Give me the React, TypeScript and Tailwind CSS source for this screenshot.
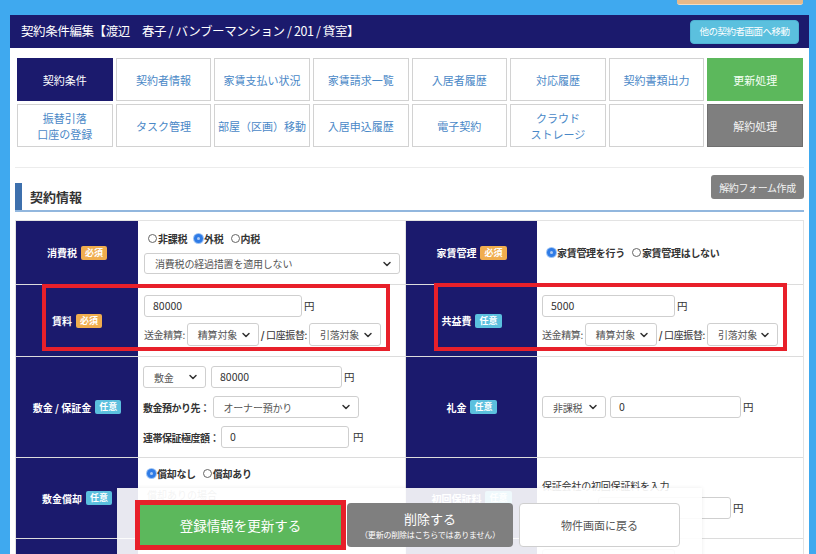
import React from "react";
import { ChevronDown } from "lucide-react";

type Tab = { label: string; kind?: "active" | "green" | "gray" };

const tabs: Tab[] = [
  { label: "契約条件", kind: "active" },
  { label: "契約者情報" },
  { label: "家賃支払い状況" },
  { label: "家賃請求一覧" },
  { label: "入居者履歴" },
  { label: "対応履歴" },
  { label: "契約書類出力" },
  { label: "更新処理", kind: "green" },
  { label: "振替引落\n口座の登録" },
  { label: "タスク管理" },
  { label: "部屋（区画）移動" },
  { label: "入居申込履歴" },
  { label: "電子契約" },
  { label: "クラウド\nストレージ" },
  { label: "" },
  { label: "解約処理", kind: "gray" },
];

function tabClass(kind?: Tab["kind"]) {
  if (kind === "active") return "bg-[#1b1a6d] border-[#1b1a6d] text-white";
  if (kind === "green") return "bg-[#5cb85c] border-[#5cb85c] text-[#f4fff4]";
  if (kind === "gray") return "bg-[#7f7f7f] border-[#6f6f6f] text-[#f2f2f2]";
  return "bg-white border-[#d2d2d2] text-[#4a88c7]";
}

function Badge({ req }: { req?: boolean }) {
  return (
    <span
      className={
        "rounded-[2px] px-[4px] py-[1px] text-[9px] font-bold leading-[12px] text-white " +
        (req ? "bg-[#f0ad4e]" : "bg-[#5bc0de]")
      }
    >
      {req ? "必須" : "任意"}
    </span>
  );
}

function Label({ text, req }: { text: string; req?: boolean }) {
  return (
    <div className="flex items-center justify-center gap-[4px] bg-[#1b1a6d] text-[10px] font-bold text-white">
      <span className="whitespace-nowrap">{text}</span>
      <Badge req={req} />
    </div>
  );
}

function Sel({ w, text, h = 22 }: { w: number; text: string; h?: number }) {
  return (
    <div
      className="flex shrink-0 items-center justify-between whitespace-nowrap rounded-[3px] border border-[#cfcfcf] bg-white pl-[10px] pr-[6px] text-[10px] font-normal tracking-[-0.2px] text-[#555]"
      style={{ width: w, height: h }}
    >
      <span>{text}</span>
      <ChevronDown size={12} strokeWidth={3} color="#333" />
    </div>
  );
}

function Input({ w, value }: { w: number; value: string }) {
  return (
    <div
      className="flex h-[22px] shrink-0 items-center rounded-[3px] border border-[#cfcfcf] bg-white px-[8px] text-[10.5px] font-normal tracking-normal text-[#333]"
      style={{ width: w }}
    >
      {value}
    </div>
  );
}

function Radio({ checked, label }: { checked?: boolean; label: string }) {
  return (
    <span className="flex items-center gap-[1px] whitespace-nowrap text-[10px] font-bold tracking-[-0.3px] text-[#333]">
      {checked ? (
        <span className="flex h-[9px] w-[9px] items-center justify-center rounded-full bg-[#2f7be6] ring-1 ring-[#9cc3f5]">
          <span className="h-[3px] w-[3px] rounded-full bg-white/60" />
        </span>
      ) : (
        <span className="h-[9px] w-[9px] rounded-full border border-[#666] bg-white" />
      )}
      {label}
    </span>
  );
}

function Yen() {
  return <span className="text-[10.5px] font-normal text-[#333]">円</span>;
}

function TransferLine({ b }: { b: number }) {
  return (
    <div className="flex items-center whitespace-nowrap text-[10px] tracking-[-0.4px] text-[#555]">
      <span>送金精算:</span>
      <span className="ml-[2px]">
        <Sel w={72} text="精算対象" h={23} />
      </span>
      <span className="mx-[2px] text-[#333]">
        <b>/</b> 口座振替:
      </span>
      <Sel w={b} text="引落対象" h={23} />
    </div>
  );
}

export default function App() {
  return (
    <div
      className="relative h-[554px] overflow-hidden bg-[#3fa9ef] pl-[10px] pr-[7px]"
      style={{ fontFamily: '"Noto Sans CJK JP", "Noto Sans", sans-serif' }}
    >
      {/* cut-off element above */}
      <div className="flex justify-end pr-[6px]">
        <div className="h-[5px] w-[126px] rounded-b-[3px] border-b border-[#f3dcc0] bg-[#e6b989]" />
      </div>

      <div className="mt-[10px] bg-white">
        {/* header */}
        <div className="flex h-[33px] items-center justify-between bg-[#1b1a6d] pl-[11px] pr-[10px]">
          <span className="whitespace-nowrap text-[12.5px] tracking-[-0.4px] text-white">
            契約条件編集【渡辺　春子 / バンブーマンション / 201 / 貸室】
          </span>
          <button className="h-[24px] w-[109px] whitespace-nowrap rounded-[4px] border border-[#4fb3d3] bg-[#5bc0de] text-[9.5px] tracking-[-0.5px] text-white">
            他の契約者画面へ移動
          </button>
        </div>

        {/* tabs */}
        <div className="grid grid-cols-8 gap-[3px] pl-[7px] pr-[6px] pt-[10px]">
          {tabs.map((t, i) => (
            <div
              key={i}
              className={
                "flex h-[43px] items-center justify-center whitespace-pre-line border text-center text-[11px] leading-[16px] " +
                tabClass(t.kind)
              }
            >
              {t.label}
            </div>
          ))}
        </div>

        <div className="mx-[5px] mt-[20px] h-px bg-[#ececec]" />

        {/* heading */}
        <div className="mx-[5px] mt-[7px] flex items-end justify-between border-b-2 border-[#92b7de]">
          <div className="mt-[8px] flex h-[27px] items-center border-l-[7px] border-[#3d70ad] pl-[8px] text-[13px] font-bold text-[#333]">
            契約情報
          </div>
          <button className="mb-[11px] h-[24px] w-[93px] self-start whitespace-nowrap rounded-[3px] bg-[#808080] text-[10px] tracking-[-0.4px] text-[#f2f2f2]">
            解約フォーム作成
          </button>
        </div>

        {/* table */}
        <div className="mx-[5px] mt-[8px] border border-[#e3e3e3]">
          {/* row 1 */}
          <div className="grid h-[63px] grid-cols-[122px_268px_131px_1fr]">
            <Label text="消費税" req />
            <div className="flex flex-col justify-center gap-[7px] border-r border-[#e3e3e3] pl-[6px] pr-[5px]">
              <div className="flex items-center gap-[7px] pl-[4px]">
                <Radio label="非課税" />
                <Radio checked label="外税" />
                <Radio label="内税" />
              </div>
              <Sel w={256} text="消費税の経過措置を適用しない" h={21} />
            </div>
            <Label text="家賃管理" req />
            <div className="flex items-center gap-[7px] pl-[10px]">
              <Radio checked label="家賃管理を行う" />
              <Radio label="家賃管理はしない" />
            </div>
          </div>

          {/* row 2 */}
          <div className="grid h-[72px] grid-cols-[122px_268px_131px_1fr] border-t border-[#dcdcdc]">
            <Label text="賃料" req />
            <div className="flex flex-col justify-center gap-[6px] border-r border-[#e3e3e3] pl-[6px]">
              <div className="flex items-center gap-[2px]">
                <Input w={158} value="80000" />
                <Yen />
              </div>
              <TransferLine b={72} />
            </div>
            <Label text="共益費" />
            <div className="flex flex-col justify-center gap-[6px] pl-[5px]">
              <div className="flex items-center gap-[2px]">
                <Input w={133} value="5000" />
                <Yen />
              </div>
              <TransferLine b={71} />
            </div>
          </div>

          {/* row 3 */}
          <div className="grid h-[101px] grid-cols-[122px_268px_131px_1fr] border-t border-[#dcdcdc]">
            <Label text="敷金 / 保証金" />
            <div className="flex flex-col justify-center gap-[8px] border-r border-[#e3e3e3] pl-[5px]">
              <div className="flex items-center gap-[5px]">
                <Sel w={63} text="敷金" />
                <div className="flex items-center gap-[2px]">
                  <Input w={131} value="80000" />
                  <Yen />
                </div>
              </div>
              <div className="flex items-center gap-[3px] whitespace-nowrap text-[10px] font-bold tracking-[-0.5px] text-[#333]">
                <span>敷金預かり先：</span>
                <Sel w={146} text="オーナー預かり" />
              </div>
              <div className="flex items-center gap-[2px] whitespace-nowrap text-[10px] font-bold tracking-[-0.5px] text-[#333]">
                <span>連帯保証極度額：</span>
                <Input w={128} value="0" />
                <span className="ml-[2px]">
                  <Yen />
                </span>
              </div>
            </div>
            <Label text="礼金" />
            <div className="flex items-center gap-[4px] pl-[5px]">
              <Sel w={64} text="非課税" />
              <div className="flex items-center gap-[2px]">
                <Input w={131} value="0" />
                <Yen />
              </div>
            </div>
          </div>

          {/* row 4 */}
          <div className="grid h-[81px] grid-cols-[122px_268px_131px_1fr] border-t border-[#dcdcdc]">
            <Label text="敷金償却" />
            <div className="flex flex-col gap-[6px] border-r border-[#e3e3e3] pl-[9px] pt-[8px]">
              <div className="flex items-center gap-[7px]">
                <Radio checked label="償却なし" />
                <Radio label="償却あり" />
              </div>
              <span className="text-[10px] text-[#888]">償却ありの場合</span>
            </div>
            <Label text="初回保証料" />
            <div className="flex flex-col justify-center gap-[4px] pl-[5px]">
              <span className="text-[10px] tracking-[-0.2px] text-[#333]">保証会社の初回保証料を入力</span>
              <div className="flex items-center gap-[2px] text-[10px] text-[#555]">
                <span className="w-[54px] whitespace-nowrap">初回保証料：</span>
                <Input w={133} value="0" />
                <Yen />
              </div>
            </div>
          </div>

          {/* row 5 */}
          <div className="grid h-[40px] grid-cols-[122px_268px_131px_1fr] border-t border-[#dcdcdc]">
            <div className="bg-[#1b1a6d]" />
            <div className="border-r border-[#e3e3e3]" />
            <div className="bg-[#1b1a6d]" />
            <div className="pl-[5px] pt-[10px]">
              <div className="h-[22px] w-[133px] rounded-[3px] border border-[#cfcfcf]" />
            </div>
          </div>
        </div>
      </div>

      {/* annotation frames */}
      <div className="pointer-events-none absolute left-[42px] top-[284px] h-[67px] w-[348px] border-[4px] border-[#e8202a]" />
      <div className="pointer-events-none absolute left-[434px] top-[283px] h-[68px] w-[353px] border-[4px] border-[#e8202a]" />

      {/* floating action bar */}
      <div className="absolute left-[117px] top-[488px] flex h-[70px] w-[585px] items-start gap-[1px] bg-white/90 pl-[18px] pt-[12px] shadow-[0_0_4px_rgba(0,0,0,0.08)]">
        <div className="border-[5px] border-[#e8202a]">
          <button className="flex h-[40px] w-[201px] items-center justify-center bg-[#5cb85c] text-[13.5px] text-white">
            登録情報を更新する
          </button>
        </div>
        <button className="mt-[3px] flex h-[44px] w-[166px] flex-col items-center justify-center rounded-[4px] bg-[#7f7f7f] text-white">
          <span className="text-[13px] leading-[18px]">削除する</span>
          <span className="whitespace-nowrap text-[8px] leading-[13px] tracking-[-0.2px]">（更新の削除はこちらではありません）</span>
        </button>
        <button className="ml-[5px] mt-[3px] h-[44px] w-[161px] rounded-[4px] border border-[#cfcfcf] bg-white text-[11px] text-[#555]">
          物件画面に戻る
        </button>
      </div>
    </div>
  );
}
